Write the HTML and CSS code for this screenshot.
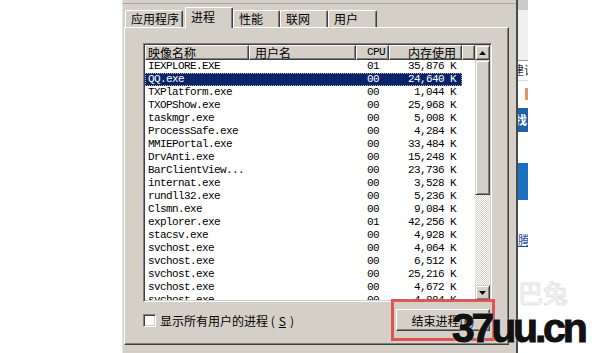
FILE: index.html
```html
<!DOCTYPE html>
<html lang="zh-CN">

<head>
  <meta charset="UTF-8">
  <title>任务管理器 - 进程</title>
  <link rel="stylesheet" href="styles.css">
</head>

<body>
  <div class="stage">
    <div class="desk"></div>

    <div class="taskmgr">
      <div class="menu-edge"></div>

      <div class="tabs">
        <div class="tab tab-first" style="width:58px">应用程序</div>
        <div class="tab on" style="width:48px">进程</div>
        <div class="tab" style="width:47px">性能</div>
        <div class="tab" style="width:48px">联网</div>
        <div class="tab" style="width:49px">用户</div>
      </div>

      <div class="panel">
        <div class="listbox">
          <div class="grid">
            <div class="head">
              <div class="hcell h-name">映像名称</div>
              <div class="hcell h-user">用户名</div>
              <div class="hcell h-cpu">CPU</div>
              <div class="hcell h-mem">内存使用</div>
              <div class="hcell h-fill"></div>
            </div>
            <div class="rows">
              <div class="row"><span>IEXPLORE.EXE</span><span></span><span>01</span><span>35,876 K</span></div>
              <div class="row sel"><span>QQ.exe</span><span></span><span>00</span><span>24,640 K</span></div>
              <div class="row"><span>TXPlatform.exe</span><span></span><span>00</span><span>1,044 K</span></div>
              <div class="row"><span>TXOPShow.exe</span><span></span><span>00</span><span>25,968 K</span></div>
              <div class="row"><span>taskmgr.exe</span><span></span><span>00</span><span>5,008 K</span></div>
              <div class="row"><span>ProcessSafe.exe</span><span></span><span>00</span><span>4,284 K</span></div>
              <div class="row"><span>MMIEPortal.exe</span><span></span><span>00</span><span>33,484 K</span></div>
              <div class="row"><span>DrvAnti.exe</span><span></span><span>00</span><span>15,248 K</span></div>
              <div class="row"><span>BarClientView...</span><span></span><span>00</span><span>23,736 K</span></div>
              <div class="row"><span>internat.exe</span><span></span><span>00</span><span>3,528 K</span></div>
              <div class="row"><span>rundll32.exe</span><span></span><span>00</span><span>5,236 K</span></div>
              <div class="row"><span>Clsmn.exe</span><span></span><span>00</span><span>9,084 K</span></div>
              <div class="row"><span>explorer.exe</span><span></span><span>01</span><span>42,256 K</span></div>
              <div class="row"><span>stacsv.exe</span><span></span><span>00</span><span>4,928 K</span></div>
              <div class="row"><span>svchost.exe</span><span></span><span>00</span><span>4,064 K</span></div>
              <div class="row"><span>svchost.exe</span><span></span><span>00</span><span>6,512 K</span></div>
              <div class="row"><span>svchost.exe</span><span></span><span>00</span><span>25,216 K</span></div>
              <div class="row"><span>svchost.exe</span><span></span><span>00</span><span>4,672 K</span></div>
              <div class="row"><span>svchost.exe</span><span></span><span>00</span><span>4,884 K</span></div>
            </div>
          </div>

          <div class="vscroll">
            <div class="sb-btn">
              <svg width="7" height="4" viewBox="0 0 7 4"><path d="M3.5 0 L7 4 L0 4 Z" fill="#000" /></svg>
            </div>
            <div class="sb-thumb"></div>
            <div class="sb-track"></div>
            <div class="sb-btn">
              <svg width="7" height="4" viewBox="0 0 7 4"><path d="M0 0 L7 0 L3.5 4 Z" fill="#000" /></svg>
            </div>
          </div>
        </div>

        <div class="panel-foot">
          <label class="check"><span class="box"></span>显示所有用户的进程 (<u>S</u>)</label>
          <button class="end-btn">结束进程(<u>E</u>)</button>
        </div>
      </div>
    </div>

    <!-- 右边露出的一点网页 -->
    <div class="page-edge">
      <div class="pe-top"></div>
      <div class="pe-bar"></div>
      <div class="pe-search">建议</div>
      <div class="pe-gap"><span class="pe-orange"></span></div>
      <div class="pe-blue">找</div>
      <div class="pe-gap2"></div>
      <div class="pe-blue2"></div>
      <div class="pe-gap3"></div>
      <div class="pe-link">腾</div>
    </div>

    <!-- 水印 -->
    <div class="mark-box"></div>
    <div class="mark-ghost">巴兔</div>
    <div class="mark-text">37uu.cn</div>
  </div>
</body>

</html>
```

FILE: styles.css
```css
body {
  margin: 0;
  background: #fff;
  font-family: "Noto Sans CJK SC", sans-serif;
  font-size: 12px;
  color: #000;
}

.stage {
  position: relative;
  display: flex;
  width: 600px;
  height: 353px;
  overflow: hidden;
}

.desk {
  width: 122px;
  flex: none;
}

.taskmgr {
  width: 396px;
  flex: none;
  box-sizing: border-box;
  background: #d4d0c8;
  border-left: 1px solid #e6e4de;
  border-right: 2px solid #4a4a4a;
  display: flex;
  flex-direction: column;
}

.menu-edge {
  height: 3px;
  border-bottom: 1px solid #aaa69e;
}

/* tabs */
.tabs {
  display: flex;
  align-items: flex-end;
  height: 23px;
  padding-left: 2px;
}

.tab {
  height: 17px;
  box-sizing: border-box;
  padding-left: 5px;
  line-height: 16px;
  white-space: nowrap;
  border: 1px solid;
  border-color: #fff #404040 transparent #fff;
  border-bottom: 0;
  border-radius: 2px 2px 0 0;
  box-shadow: inset -1px 0 #808080;
}

.tab-first {
  margin-right: 2px;
}

.tab.on {
  position: relative;
  z-index: 1;
  height: 21px;
  margin-bottom: -1px;
  line-height: 18px;
  background: #d4d0c8;
}

/* panel */
.panel {
  margin-left: 1px;
  width: 385px;
  height: 318px;
  box-sizing: border-box;
  padding: 15px 15px 0 18px;
  border: 1px solid;
  border-color: #fff #404040 #404040 #fff;
  box-shadow: inset -1px -1px #808080;
}

.listbox {
  display: flex;
  width: 349px;
  height: 259px;
  box-sizing: border-box;
  padding: 1px;
  background: #fff;
  border: 1px solid;
  border-color: #808080 #fff #fff #808080;
  box-shadow: inset 1px 1px #404040, inset -1px -1px #d4d0c8;
}

.grid {
  flex: 1;
  overflow: hidden;
}

.head {
  display: flex;
  height: 15px;
}

.hcell {
  height: 15px;
  box-sizing: border-box;
  line-height: 13px;
  white-space: nowrap;
  overflow: hidden;
  background: #d4d0c8;
  border: 1px solid;
  border-color: #fff #404040 #404040 #fff;
  box-shadow: inset -1px -1px #808080;
}

.h-name {
  width: 104px;
  padding-left: 2px;
}

.h-user {
  width: 107px;
  padding-left: 5px;
}

.h-cpu {
  width: 33px;
  padding-left: 10px;
  font-family: "Liberation Mono", monospace;
  font-size: 11px;
  letter-spacing: -0.6px;
}

.h-mem {
  width: 73px;
  padding-right: 5px;
  text-align: right;
}

.h-fill {
  flex: 1;
}

.row {
  display: grid;
  grid-template-columns: 104px 107px 33px 73px;
  width: 317px;
  height: 13px;
  line-height: 13px;
  font-family: "Liberation Mono", monospace;
  font-size: 11px;
  letter-spacing: -0.6px;
  white-space: nowrap;
}

.row span:nth-child(1) {
  padding-left: 3px;
}

.row span:nth-child(3) {
  padding-left: 11px;
}

.row span:nth-child(4) {
  text-align: right;
  padding-right: 6px;
}

.row.sel {
  background: #0a246a;
  color: #fff;
  outline: 1px dotted #b8b0a0;
  outline-offset: -1px;
}

/* scrollbar */
.vscroll {
  width: 15px;
  display: flex;
  flex-direction: column;
}

.sb-btn,
.sb-thumb {
  box-sizing: border-box;
  background: #d4d0c8;
  border: 1px solid;
  border-color: #d4d0c8 #404040 #404040 #d4d0c8;
  box-shadow: inset 1px 1px #fff, inset -1px -1px #808080;
}

.sb-btn {
  height: 15px;
  display: flex;
  align-items: center;
  justify-content: center;
}

.sb-thumb {
  height: 135px;
}

.sb-track {
  flex: 1;
  background: repeating-conic-gradient(#d4d0c8 0 25%, #fff 0 50%) 0 0 / 2px 2px;
}

/* bottom row */
.panel-foot {
  display: flex;
  align-items: center;
  height: 22px;
  margin-top: 7px;
}

.check {
  display: flex;
  align-items: center;
  gap: 4px;
}

.check .box {
  width: 13px;
  height: 13px;
  box-sizing: border-box;
  background: #fff;
  border: 1px solid;
  border-color: #808080 #fff #fff #808080;
  box-shadow: inset 1px 1px #404040, inset -1px -1px #d4d0c8;
}

.end-btn {
  margin-left: auto;
  margin-right: 3px;
  width: 94px;
  height: 22px;
  padding: 0;
  font-family: inherit;
  font-size: 12px;
  color: #000;
  background: #d4d0c8;
  border: 1px solid;
  border-color: #fff #404040 #404040 #fff;
  box-shadow: inset -1px -1px #808080;
}

/* web page peeking out on the right */
.page-edge {
  width: 10px;
  flex: none;
  display: flex;
  flex-direction: column;
  overflow: hidden;
}

.pe-top {
  height: 10px;
  background: #cbcbcb;
}

.pe-bar {
  height: 50px;
  background: #f0f0f0;
}

.pe-search {
  height: 19px;
  line-height: 18px;
  text-indent: -6px;
  white-space: nowrap;
  border-top: 1px solid #9a9a9a;
  border-bottom: 1px solid #ddd;
  color: #333;
}

.pe-gap {
  height: 27px;
}

.pe-orange {
  display: block;
  margin: 7px 0 0 7px;
  width: 3px;
  height: 12px;
  background: #e49466;
}

.pe-blue {
  height: 24px;
  line-height: 24px;
  text-indent: -3px;
  background: #1b62a8;
  color: #fff;
  font-weight: bold;
}

.pe-gap2,
.pe-gap3 {
  height: 31px;
}

.pe-blue2 {
  height: 37px;
  background: #1b70c2;
}

.pe-link {
  height: 18px;
  line-height: 18px;
  color: #1a4fa0;
  text-decoration: underline;
  white-space: nowrap;
}

/* watermark */
.mark-box {
  position: absolute;
  left: 391px;
  top: 299px;
  width: 104px;
  height: 42px;
  box-sizing: border-box;
  border: 3px solid rgba(222, 70, 70, 0.9);
}

.mark-ghost {
  position: absolute;
  left: 518px;
  top: 278px;
  font-size: 25px;
  line-height: 28px;
  color: transparent;
  -webkit-text-stroke: 1px #e2e2e2;
}

.mark-text {
  position: absolute;
  left: 452px;
  top: 308px;
  font-family: "Liberation Sans", sans-serif;
  font-weight: bold;
  font-size: 41px;
  line-height: 41px;
  letter-spacing: -3.2px;
  color: #111;
  -webkit-text-stroke: 1px #111;
  text-shadow: 0 0 2px #fff, 0 0 2px #fff;
}
```
